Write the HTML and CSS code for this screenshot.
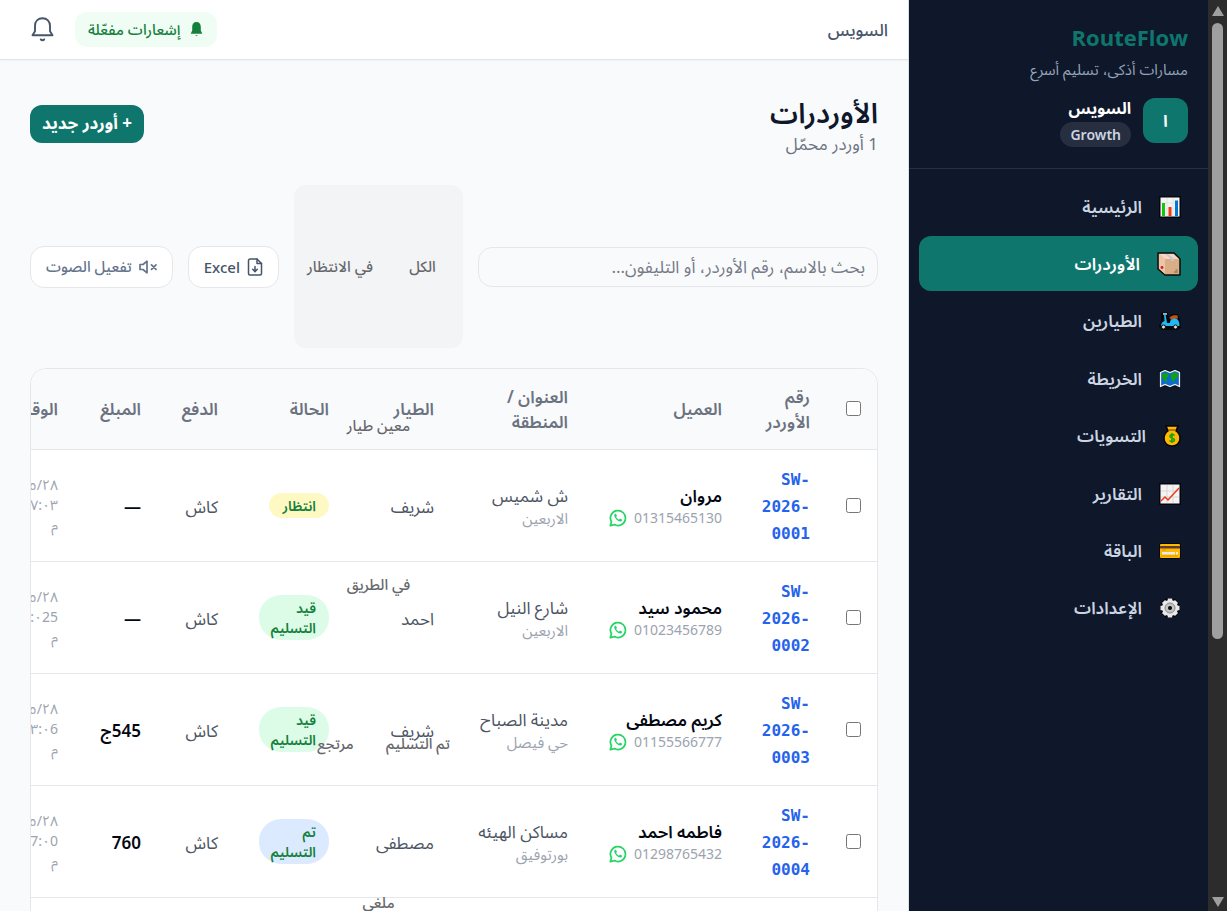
FILE: index.html
```html
<!DOCTYPE html>
<html lang="ar" dir="rtl">
<head>
    <meta charset="UTF-8">
    <meta name="viewport" content="width=device-width, initial-scale=1.0">
    <title>RouteFlow - الأوردرات</title>
    <link rel="stylesheet" href="styles.css">
</head>
<body>
    <!-- Page scrollbar -->
    <div class="scrollbar" aria-hidden="true">
        <span class="arrow-up"></span>
        <span class="thumb"></span>
        <span class="arrow-down"></span>
    </div>

    <aside class="sidebar">
        <div class="brand">
            <div class="brand-name">RouteFlow</div>
            <div class="brand-tagline">مسارات أذكى، تسليم أسرع</div>
            <div class="account">
                <div class="avatar">ا</div>
                <div class="account-info">
                    <div class="account-name">السويس</div>
                    <span class="plan">Growth</span>
                </div>
            </div>
        </div>
        <nav class="menu">
            <a href="#">
                <svg width="22" height="22" viewBox="0 0 22 22"><rect x="0" y="0" width="22" height="22" rx="1" fill="#05070c"/><rect x="1.500" y="1.500" width="19" height="19" fill="#f4f4f4"/><path d="M2 7h18M2 13h18M8 2v18M14 2v18" stroke="#dcdcdc" stroke-width=".7"/><path fill="#16c60c" d="M3 7h3v13H3z"/><path fill="#f03a17" d="M9.500 11h3v9h-3z"/><path fill="#0078d7" d="M16 4.500h3V20h-3z"/></svg>
                <span>الرئيسية</span>
            </a>
            <a href="#" class="active">
                <svg width="24" height="24" viewBox="0 0 24 24"><path d="M1 1h16l6 6v16H8l-7-6z" fill="#d9ad86" stroke="#0b0b0b" stroke-width="1.500" stroke-linejoin="round"/><path d="M2 2h14.500l5.500 5H8z" fill="#fbd5c4"/><path d="M2 2l6 5v15l-6-5.500z" fill="#eac5a8"/><path d="M8 2h3l6 5v2h-3V7z" fill="#c3c9ce"/><circle cx="5" cy="15.500" r="1.400" fill="#e81224"/><path d="M17 20h4M18.500 18h2" stroke="#8b6547"/></svg>
                <span>الأوردرات</span>
            </a>
            <a href="#">
                <svg width="22" height="18" viewBox="0 0 22 18"><path d="M3 1.500h5l2 7 3-5.500h5l2 4.500 1 7.500-3 2H3l-2-3 2-5z" fill="#05070c" stroke="#05070c" stroke-width="2" stroke-linejoin="round"/><path d="M4 2h4" stroke="#dbe4ea" stroke-width="1.500"/><path d="M6.500 2L8 11h3c0-3 2-5 5-5 3 1 4.500 3 4.500 8H7c-1.500-1-3-1.500-5 0 0-2.500 1.500-4.500 3.500-5L5 2z" fill="#21b8f2"/><path d="M10.500 5.500C13 3 16 3 18.500 3.500l.5 3h-3c-2 0-3 .5-4 1.500z" fill="#ca5010"/><circle cx="4.500" cy="15" r="2" fill="#dcdcdc" stroke="#111"/><circle cx="16.500" cy="15" r="2" fill="#dcdcdc" stroke="#111"/></svg>
                <span>الطيارين</span>
            </a>
            <a href="#">
                <svg width="22" height="20" viewBox="0 0 22 20"><path d="M1 3l5-2 5 2 5-2 5 2v15l-5-2-5 2-5-2-5 2z" fill="#0b6bd3" stroke="#05070c" stroke-width="2"/><path d="M1.500 3.500l4.500-2 5 2 5-2 4.500 2v14l-4.500-2-5 2-5-2-4.500 2z" fill="#0b6bd3" stroke="#eee" stroke-width="1.300"/><path d="M3 5l4-1 3 1-1 3-2 1 1 2-1 3-2-3-2-3zM12 5l5-2 2 3-1 3-2 1-1 4-2-3-1-2z" fill="#13a10e"/></svg>
                <span>الخريطة</span>
            </a>
            <a href="#">
                <svg width="18" height="22" viewBox="0 0 18 22"><path d="M3 1h12l-2 5c3 2 4 4 4 7.500A7.500 7.500 0 0 1 9 21a7.500 7.500 0 0 1-8-7.500C1 10 2 8 5 6z" fill="#ffb900" stroke="#05070c" stroke-width="1.500"/><path d="M5 5h8" stroke="#9a5b13" stroke-width="1.400"/><path d="M11.500 10.500C10 9 6.500 9.500 7 11.500s4.500 1.500 4.500 3.500-3.500 2-5 .5M9 8v10" fill="none" stroke="#13a10e" stroke-width="1.500"/></svg>
                <span>التسويات</span>
            </a>
            <a href="#">
                <svg width="22" height="22" viewBox="0 0 22 22"><rect x="0" y="0" width="22" height="22" rx="1" fill="#05070c"/><rect x="1.500" y="1.500" width="19" height="19" fill="#f4f4f4"/><path d="M2 8h18M2 14h18M8 2v18M14 2v18" stroke="#d5d5d5" stroke-width=".9"/><path d="M2 18l4-4 3 3L20 5" fill="none" stroke="#f03a17" stroke-width="1.500"/></svg>
                <span>التقارير</span>
            </a>
            <a href="#">
                <svg width="22" height="16" viewBox="0 0 22 16"><rect x=".5" y=".5" width="21" height="15" rx="1.500" fill="#ffb900" stroke="#05070c"/><path fill="#603d30" d="M1 3h20v2.500H1z"/><path fill="#e9e9e9" d="M3 9h13v2.500H3zM17 9h2v2.500h-2z"/><path d="M3 7h4M2 13h17" stroke="#d39300" stroke-width=".8"/></svg>
                <span>الباقة</span>
            </a>
            <a href="#">
                <svg width="22" height="22" viewBox="0 0 22 22"><g stroke="#05070c" stroke-width="7"><path d="M11 1v20M1 11h20M4 4l14 14M18 4L4 18"/></g><g stroke="#e8e8e8" stroke-width="4.500"><path d="M11 1.500v19M1.500 11h19M4.500 4.500l13 13M17.500 4.500l-13 13"/></g><circle cx="11" cy="11" r="8" fill="#e8e8e8"/><circle cx="11" cy="11" r="5" fill="#c4c4c4" stroke="#8a8a8a"/><circle cx="11" cy="11" r="2" fill="#05070c"/></svg>
                <span>الإعدادات</span>
            </a>
        </nav>
    </aside>

    <div class="page">
        <header class="topbar">
            <div class="branch">السويس</div>
            <div class="topbar-actions">
                <button class="notify">
                    <svg width="13" height="16" viewBox="0 0 13 16"><path d="M6.500 0C3.500 0 2.200 2 2.200 5v3.500L.7 11.800h11.600l-1.500-3.300V5c0-3-1.300-5-4.300-5z" fill="#15803d"/><path d="M5.200 13.200h2.600l-1.300 1z" fill="#15803d"/></svg>
                    إشعارات مفعّلة
                </button>
                <button class="bell" aria-label="الإشعارات">
                    <svg width="23" height="25" viewBox="0 0 23 25" fill="none" stroke="#475569" stroke-width="1.900" stroke-linecap="round" stroke-linejoin="round"><path d="M1.500 18.300h20l-2.500-4V9c0-4.500-3-7.700-7.500-7.700S4 4.500 4 9v5.300z"/><path d="M9.800 22.400c.8 1.200 2.600 1.200 3.400 0"/></svg>
                </button>
            </div>
        </header>

        <main class="content">
            <div class="heading">
                <div>
                    <h1>الأوردرات</h1>
                    <p>1 أوردر محمّل</p>
                </div>
                <button class="new-order">+ أوردر جديد</button>
            </div>

            <div class="toolbar">
                <input class="search" type="text" aria-label="بحث" placeholder="بحث بالاسم، رقم الأوردر، أو التليفون...">
                <div class="tabs">
                    <button>الكل</button>
                    <button>في الانتظار</button>
                    <button>معين طيار</button>
                    <button>في الطريق</button>
                    <button>تم التسليم</button>
                    <button>مرتجع</button>
                    <button>ملغي</button>
                </div>
                <button class="tool excel">
                    <svg width="16" height="18" viewBox="0 0 16 18" fill="none" stroke="#475569" stroke-width="1.500" stroke-linecap="round" stroke-linejoin="round"><path d="M10 1H3a1.500 1.500 0 0 0-1.500 1.500v13A1.500 1.500 0 0 0 3 17h10a1.500 1.500 0 0 0 1.500-1.500v-10z"/><path d="M10 1v4.500h4.500M8 8.500v5M5.700 11.300L8 13.600l2.300-2.300"/></svg>
                    Excel
                </button>
                <button class="tool sound">
                    <svg width="18" height="14" viewBox="0 0 18 14" fill="none" stroke="#64748b" stroke-width="1.700" stroke-linecap="round" stroke-linejoin="round"><path d="M1 4.500h3l4-3.300v11.600L4 9.500H1zM12.500 4.800l4.500 4.500M17 4.800l-4.500 4.500"/></svg>
                    تفعيل الصوت
                </button>
            </div>

            <div class="table-card">
                <table>
                    <colgroup>
                        <col class="col-check"><col class="col-order"><col class="col-customer"><col class="col-address"><col class="col-rider"><col class="col-status"><col class="col-payment"><col class="col-amount"><col class="col-time">
                    </colgroup>
                    <thead>
                        <tr>
                            <th><input type="checkbox" aria-label="تحديد الكل"></th>
                            <th>رقم الأوردر</th>
                            <th>العميل</th>
                            <th>العنوان / المنطقة</th>
                            <th>الطيار</th>
                            <th>الحالة</th>
                            <th>الدفع</th>
                            <th>المبلغ</th>
                            <th>الوقت</th>
                        </tr>
                    </thead>
                    <tbody id="orders"></tbody>
                </table>
            </div>
        </main>
    </div>

    <script src="script.js"></script>
</body>
</html>
```

FILE: styles.css
```css
* {
    box-sizing: border-box;
}

body {
    margin: 0;
    height: 100vh;
    display: flex;
    overflow: hidden;
    font-family: "Noto Sans", "Noto Sans Arabic", "DejaVu Sans", sans-serif;
    font-size: 16px;
    line-height: 24px;
    color: #0f172a;
    background-color: #f9fafc;
}

button,
input {
    font-family: inherit;
}

button {
    cursor: pointer;
}

svg {
    display: block;
    flex-shrink: 0;
}

/* Scrollbar */
.scrollbar {
    flex: 0 0 19px;
    display: flex;
    flex-direction: column;
    align-items: center;
    padding: 6px 0 4px;
    background-color: #2c2c2c;
}

.arrow-up,
.arrow-down {
    border-left: 6px solid transparent;
    border-right: 6px solid transparent;
}

.arrow-up {
    border-bottom: 10px solid #9f9f9f;
}

.arrow-down {
    margin-top: auto;
    border-top: 10px solid #9f9f9f;
}

.thumb {
    width: 11px;
    height: 616px;
    margin-top: 7px;
    border-radius: 6px;
    background-color: #9f9f9f;
}

/* Sidebar */
.sidebar {
    flex: 0 0 299px;
    background-color: #0f172a;
}

.brand {
    padding: 23px 20px 21px;
    border-bottom: 1px solid #273043;
}

.brand-name {
    font-family: "Open Sans", "Noto Sans", sans-serif;
    font-size: 22px;
    line-height: 28px;
    font-weight: 700;
    color: #0f766e;
}

.brand-tagline {
    margin-top: 6px;
    font-size: 15px;
    color: #94a3b8;
}

.account {
    display: flex;
    gap: 12px;
    margin-top: 15px;
}

.avatar {
    display: flex;
    align-items: center;
    justify-content: center;
    width: 45px;
    height: 45px;
    margin-top: 2px;
    border-radius: 12px;
    background-color: #0f766e;
    color: #fff;
    font-weight: 700;
}

.account-name {
    color: #fff;
    font-weight: 700;
}

.plan {
    display: block;
    width: fit-content;
    margin-top: 2px;
    padding: 0 10px;
    border-radius: 13px;
    background-color: #272e3f;
    color: #cbd5e1;
    font-size: 14px;
    line-height: 25px;
    font-weight: 600;
}

.menu {
    display: flex;
    flex-direction: column;
    justify-content: space-between;
    min-height: 477px;
    padding: 10px;
}

.menu a {
    display: flex;
    align-items: center;
    gap: 17px;
    height: 55px;
    padding: 0 17px;
    border-radius: 12px;
    color: #cbd5e1;
    font-size: 17px;
    font-weight: 600;
    text-decoration: none;
}

.menu a.active {
    background-color: #0f766e;
    color: #fff;
}

/* Top bar */
.page {
    flex: 1;
    min-width: 0;
    border-right: 1px solid #dbe3ea;
}

.topbar {
    display: flex;
    align-items: center;
    justify-content: space-between;
    height: 60px;
    padding: 0 20px 0 31px;
    background-color: #fff;
    border-bottom: 1px solid #e2e4e8;
    box-shadow: 0 1px 2px rgba(0, 0, 0, 0.04);
}

.branch {
    font-size: 17px;
    font-weight: 500;
    color: #475569;
}

.topbar-actions {
    display: flex;
    align-items: center;
    gap: 21px;
}

.notify {
    display: flex;
    align-items: center;
    gap: 9px;
    height: 35px;
    padding: 0 14px 0 13px;
    border: none;
    border-radius: 12px;
    background-color: #f0fdf4;
    color: #15803d;
    font-size: 15px;
    font-weight: 500;
}

.bell {
    padding: 0;
    border: none;
    background: none;
}

/* Content */
.content {
    padding: 32px 30px 0;
}

.heading {
    display: flex;
    align-items: center;
    justify-content: space-between;
    margin-bottom: 29px;
}

h1 {
    margin: 0;
    font-size: 28px;
    line-height: 40px;
    font-weight: 600;
}

.heading p {
    margin: 0;
    color: #6b7280;
    font-size: 17px;
}

.new-order {
    height: 38px;
    padding: 0 12px;
    border: none;
    border-radius: 12px;
    background-color: #0f766e;
    color: #fff;
    font-size: 17px;
    font-weight: 700;
}

.toolbar {
    display: flex;
    align-items: center;
    gap: 15px;
    margin-bottom: 20px;
}

.search {
    flex: 1;
    min-width: 0;
    height: 40px;
    padding: 0 12px;
    border: 1px solid #e5e7eb;
    border-radius: 14px;
    background: transparent;
    font-size: 17px;
}

.search::placeholder {
    color: #757b87;
}

/* The buttons keep the full height, so the extra rows run over the table */
.tabs {
    position: relative;
    z-index: 1;
    display: flex;
    flex-wrap: wrap;
    flex: 0 0 169px;
    gap: 4px;
    height: 163px;
    padding: 4px;
    border-radius: 12px;
    background-color: #f3f4f6;
}

.tabs button {
    flex: 1 1 70px;
    height: 155px;
    padding: 0 9px;
    border: none;
    background: none;
    color: #66676c;
    font-size: 15px;
    font-weight: 500;
    white-space: nowrap;
}

.tool {
    display: flex;
    align-items: center;
    gap: 7px;
    height: 42px;
    padding: 0 15px;
    border: 1px solid #e5e7eb;
    border-radius: 14px;
    background-color: #fff;
    color: #475569;
    font-size: 15px;
    font-weight: 500;
    white-space: nowrap;
}

.sound {
    color: #64748b;
}

/* Orders table */
.table-card {
    overflow: hidden;
    border: 1px solid #e5e7eb;
    border-radius: 16px;
    background-color: #fff;
}

table {
    width: 950px;
    table-layout: fixed;
    border-collapse: collapse;
}

.col-check {
    width: 51px;
}

.col-order {
    width: 88px;
}

.col-customer {
    width: 154px;
}

.col-address {
    width: 134px;
}

.col-rider {
    width: 105px;
}

.col-status {
    width: 111px;
}

.col-payment {
    width: 77px;
}

.col-amount {
    width: 83px;
}

th,
td {
    padding: 0 16px;
    text-align: right;
    border-bottom: 1px solid #e5e7eb;
}

th {
    height: 80px;
    background-color: #f9fafc;
    color: #6b7280;
    font-size: 17px;
    line-height: 25px;
    font-weight: 600;
}

td {
    height: 112px;
    color: #4b5563;
    font-size: 17px;
}

td.text {
    padding-top: 3px;
}

input[type="checkbox"] {
    display: block;
    width: 15px;
    height: 15px;
    margin: 0;
}

.order-id {
    color: #2563eb;
    font-family: "DejaVu Sans Mono", monospace;
    font-size: 16px;
    line-height: 27px;
    font-weight: 700;
}

.customer {
    color: #030712;
    font-weight: 600;
    line-height: 22px;
}

.phone {
    display: flex;
    align-items: center;
    gap: 7px;
    color: #9ca3af;
    font-size: 14px;
    line-height: 22px;
}

.address {
    line-height: 22px;
}

.area {
    color: #9ca3af;
    font-size: 15px;
    line-height: 22px;
}

.badge {
    display: block;
    width: fit-content;
    max-width: 70px;
    padding: 3px 13px 2px;
    border-radius: 22px;
    color: #15803d;
    font-size: 14px;
    line-height: 20px;
    font-weight: 600;
}

.waiting {
    background-color: #fef9c3;
}

.delivering {
    background-color: #dcfce7;
}

.delivered {
    background-color: #dbeafe;
}

.amount {
    color: #030712;
    font-weight: 600;
}

.time {
    color: #9ca3af;
    font-size: 14px;
    line-height: 20px;
}

.time bdo {
    display: block;
    text-align: right;
}
```

FILE: script.js
```js
const orders = [
    { id: '0001', name: 'مروان', phone: '01315465130', address: 'ش شميس', area: 'الاربعين', rider: 'شريف', status: 'waiting', amount: '—', time: '٠٧:٠٣' },
    { id: '0002', name: 'محمود سيد', phone: '01023456789', address: 'شارع النيل', area: 'الاربعين', rider: 'احمد', status: 'delivering', amount: '—', time: '٠٢:٠25' },
    { id: '0003', name: 'كريم مصطفى', phone: '01155566777', address: 'مدينة الصباح', area: 'حي فيصل', rider: 'شريف', status: 'delivering', amount: '545ج', time: '٠٣:٠6' },
    { id: '0004', name: 'فاطمه احمد', phone: '01298765432', address: 'مساكن الهيئه', area: 'بورتوفيق', rider: 'مصطفى', status: 'delivered', amount: '760', time: '٠7:٠0' },
    { id: '0005', name: '', phone: '', address: '', area: '', rider: '', status: '', amount: '', time: '' }
];

const statusText = {
    waiting: 'انتظار',
    delivering: 'قيد التسليم',
    delivered: 'تم التسليم'
};

const whatsapp = '<svg width="18" height="18" viewBox="0 0 18 18"><path d="M1.300 16.700l1.100-4A7.500 7.500 0 1 1 5.300 15.600z" fill="none" stroke="#25d366" stroke-width="1.700" stroke-linejoin="round"/><path d="M6.200 4.700c-.9.600-1.200 1.800-.6 3 1 2.300 2.800 4 5 4.700 1.300.4 2.400-.3 2.600-1.600l-2.200-1.200-1.100 1.100c-1.300-.6-2.200-1.500-2.800-2.700l.8-1.100-.9-2.200z" fill="#25d366"/></svg>';

function orderRow(order) {
    // Empty row, still loading
    if (!order.name) {
        return '<tr><td colspan="9"></td></tr>';
    }
    return `<tr>
        <td><input type="checkbox" aria-label="${order.id}"></td>
        <td class="text order-id"><bdo dir="ltr">SW-<br>2026-<br>${order.id}</bdo></td>
        <td class="text"><div class="customer">${order.name}</div><div class="phone">${order.phone}${whatsapp}</div></td>
        <td class="text"><div class="address">${order.address}</div><div class="area">${order.area}</div></td>
        <td class="text">${order.rider}</td>
        <td><span class="badge ${order.status}">${statusText[order.status]}</span></td>
        <td class="text">كاش</td>
        <td class="text amount">${order.amount}</td>
        <td class="time"><bdo dir="ltr">٥/٢٨</bdo><bdo dir="ltr">${order.time}</bdo>م</td>
    </tr>`;
}

document.getElementById('orders').innerHTML = orders.map(orderRow).join('');
```
